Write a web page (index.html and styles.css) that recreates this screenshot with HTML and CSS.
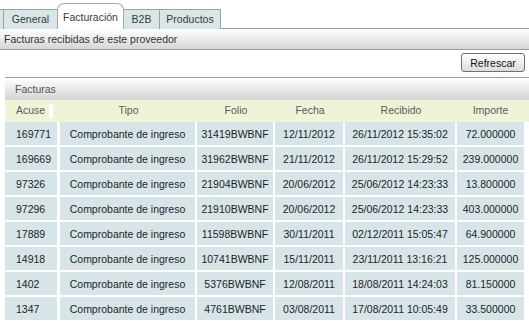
FILE: index.html
```
<!DOCTYPE html>
<html lang="es">
<head>
    <meta charset="UTF-8">
    <title>Facturas del proveedor</title>
    <link rel="stylesheet" href="styles.css">
</head>
<body>
    <!-- Pestañas -->
    <div class="tabs">
        <div class="tab tab-edge"></div>
        <div class="tab tab-general">General</div>
        <div class="tab tab-active tab-factura">Facturación</div>
        <div class="tab tab-b2b">B2B</div>
        <div class="tab tab-productos">Productos</div>
    </div>

    <div class="subheader">Facturas recibidas de este proveedor</div>

    <div class="toolbar">
        <button class="btn">Refrescar</button>
    </div>

    <div class="panel">
        <div class="panel-title">Facturas</div>

        <div class="grid-head">
            <div class="col col-acuse">Acuse<span class="handle"></span></div>
            <div class="col col-tipo">Tipo</div>
            <div class="col col-folio">Folio</div>
            <div class="col col-fecha">Fecha</div>
            <div class="col col-recibido">Recibido</div>
            <div class="col col-importe">Importe</div>
        </div>

        <table class="grid">
            <tr>
                <td class="col-acuse">169771</td>
                <td class="col-tipo">Comprobante de ingreso</td>
                <td class="col-folio">31419BWBNF</td>
                <td class="col-fecha">12/11/2012</td>
                <td class="col-recibido">26/11/2012 15:35:02</td>
                <td class="col-importe">72.000000</td>
            </tr>
            <tr>
                <td class="col-acuse">169669</td>
                <td class="col-tipo">Comprobante de ingreso</td>
                <td class="col-folio">31962BWBNF</td>
                <td class="col-fecha">21/11/2012</td>
                <td class="col-recibido">26/11/2012 15:29:52</td>
                <td class="col-importe">239.000000</td>
            </tr>
            <tr>
                <td class="col-acuse">97326</td>
                <td class="col-tipo">Comprobante de ingreso</td>
                <td class="col-folio">21904BWBNF</td>
                <td class="col-fecha">20/06/2012</td>
                <td class="col-recibido">25/06/2012 14:23:33</td>
                <td class="col-importe">13.800000</td>
            </tr>
            <tr>
                <td class="col-acuse">97296</td>
                <td class="col-tipo">Comprobante de ingreso</td>
                <td class="col-folio">21910BWBNF</td>
                <td class="col-fecha">20/06/2012</td>
                <td class="col-recibido">25/06/2012 14:23:33</td>
                <td class="col-importe">403.000000</td>
            </tr>
            <tr>
                <td class="col-acuse">17889</td>
                <td class="col-tipo">Comprobante de ingreso</td>
                <td class="col-folio">11598BWBNF</td>
                <td class="col-fecha">30/11/2011</td>
                <td class="col-recibido">02/12/2011 15:05:47</td>
                <td class="col-importe">64.900000</td>
            </tr>
            <tr>
                <td class="col-acuse">14918</td>
                <td class="col-tipo">Comprobante de ingreso</td>
                <td class="col-folio">10741BWBNF</td>
                <td class="col-fecha">15/11/2011</td>
                <td class="col-recibido">23/11/2011 13:16:21</td>
                <td class="col-importe">125.000000</td>
            </tr>
            <tr>
                <td class="col-acuse">1402</td>
                <td class="col-tipo">Comprobante de ingreso</td>
                <td class="col-folio">5376BWBNF</td>
                <td class="col-fecha">12/08/2011</td>
                <td class="col-recibido">18/08/2011 14:24:03</td>
                <td class="col-importe">81.150000</td>
            </tr>
            <tr>
                <td class="col-acuse">1347</td>
                <td class="col-tipo">Comprobante de ingreso</td>
                <td class="col-folio">4761BWBNF</td>
                <td class="col-fecha">03/08/2011</td>
                <td class="col-recibido">17/08/2011 10:05:49</td>
                <td class="col-importe">33.500000</td>
            </tr>
        </table>
    </div>
</body>
</html>
```

FILE: styles.css
```
* {
    margin: 0;
    padding: 0;
    box-sizing: border-box;
}
body {
    font-family: 'Liberation Sans', Arial, sans-serif;
    font-size: 10.5px;
    color: #222;
    background: #fff;
    width: 529px;
    overflow: hidden;
}

/* Pestañas */
.tabs {
    display: flex;
    align-items: flex-end;
    height: 29px;
    border-bottom: 1px solid #9a9a9a;
}
.tab {
    height: 20px;
    margin-bottom: -1px;
    margin-left: -1px;
    border: 1px solid #9aa3a4;
    border-bottom: none;
    background: #d8e6e8;
    color: #3a3a3a;
    text-align: center;
    line-height: 19px;
}
.tab-edge {
    width: 4px;
    margin-left: 0;
    border-left: none;
}
.tab-general { width: 55px; }
.tab-factura { width: 67px; }
.tab-b2b { width: 37px; }
.tab-productos { width: 62px; }
.tab-active {
    height: 26px;
    line-height: 26px;
    background: #fff;
    border-color: #a8a8a8;
    border-radius: 7px 7px 0 0;
    position: relative;
    z-index: 1;
}

/* Subtítulo */
.subheader {
    height: 21px;
    padding-left: 4px;
    line-height: 20px;
    color: #333;
    background: linear-gradient(#ffffff, #d6d6d6);
    border-bottom: 1px solid #9c9c9c;
}

.toolbar {
    display: flex;
    justify-content: flex-end;
    height: 27px;
    padding: 3px 4px 0 0;
}
.btn {
    width: 64px;
    height: 19px;
    font-family: inherit;
    font-size: 10.5px;
    color: #111;
    background: linear-gradient(#ffffff, #dcdcdc);
    border: 1px solid #707070;
    border-radius: 3px;
}

/* Panel de facturas */
.panel {
    margin-left: 5px;
}
.panel-title {
    height: 23px;
    padding-left: 10px;
    line-height: 22px;
    color: #555;
    border-top: 1px solid #9a9a9a;
    background: linear-gradient(#ffffff, #d4d4d4);
}
.grid-head {
    display: flex;
    height: 22px;
    background: #eff3d8;
    color: #5a5a5a;
    line-height: 21px;
}
.col {
    text-align: center;
    position: relative;
}
.grid-head .col-acuse {
    text-align: left;
    padding-left: 11px;
}
.handle {
    position: absolute;
    left: 44px;
    top: 4px;
    width: 4px;
    height: 14px;
    background: #fff;
}

.grid {
    width: 519px;
    border-collapse: separate;
    border-spacing: 0;
    table-layout: fixed;
}
.grid td {
    height: 25px;
    background: #d7e5e8;
    background-clip: padding-box;
    border-right: 2px solid #fff;
    border-bottom: 2px solid #fff;
    text-align: center;
    white-space: nowrap;
    color: #1e1e1e;
}
.grid td:last-child {
    border-right: none;
}
.col-acuse { width: 55px; }
.col-tipo { width: 137px; }
.col-folio { width: 78px; }
.col-fecha { width: 70px; }
.col-recibido { width: 112px; }
.col-importe { width: 67px; }
.grid td.col-acuse {
    text-align: left;
    padding-left: 11px;
    border-right-width: 3px;
}
```
